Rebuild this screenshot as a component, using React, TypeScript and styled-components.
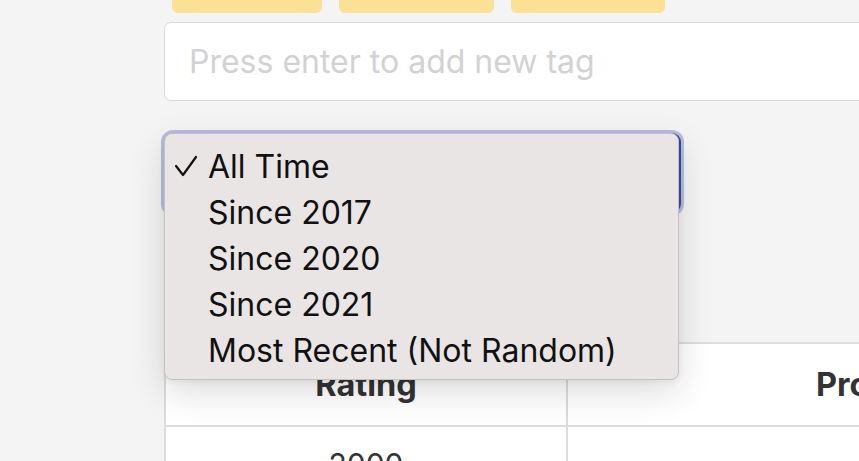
import React from "react";
import styled, { createGlobalStyle } from "styled-components";

const Global = createGlobalStyle`
  html, body { margin: 0; padding: 0; background: #f4f4f4; overflow: hidden; }
  body { font-family: Inter, "Noto Sans", sans-serif; }
`;

const Page = styled.div`
  width: 859px;
  height: 461px;
  overflow: hidden;
  padding-left: 164px;
  box-sizing: border-box;
  display: flex;
  flex-direction: column;
  & > * { flex-shrink: 0; }
`;

const TagRow = styled.div`
  display: flex;
  gap: 17px;
  padding-left: 8px;
  height: 13px;
`;

const Tag = styled.div<{ $w: number }>`
  width: ${(p) => p.$w}px;
  height: 13px;
  background: #fbe195;
  border-radius: 0 0 6px 6px;
`;

const TagInput = styled.input`
  margin-top: 9px;
  width: 760px;
  height: 79px;
  box-sizing: border-box;
  border: 1.5px solid #dadada;
  border-radius: 7px;
  background: #fff;
  padding: 0 0 0 24px;
  font-family: Inter, "Noto Sans", sans-serif;
  font-size: 32px;
  outline: none;
  &::placeholder { color: #d2d2d2; }
`;

const SelectWrap = styled.div`
  position: relative;
  margin-top: 32px;
  width: 517px;
  height: 80px;
`;

const SelectBox = styled.div`
  width: 517px;
  height: 80px;
  box-sizing: border-box;
  border: 2px solid #3b4aa8;
  border-radius: 9px;
  box-shadow: 0 0 0 3px #b9bedf;
  background: #fff;
`;

const Popup = styled.ul`
  position: absolute;
  left: 0;
  top: 0;
  width: 515px;
  height: 247px;
  box-sizing: border-box;
  margin: 0;
  padding: 9px 0 0 0;
  list-style: none;
  background: #e8e5e4;
  border: 1px solid #c4c2c1;
  border-radius: 8px;
  box-shadow: 0 12px 36px rgba(0, 0, 0, 0.14), 0 2px 6px rgba(0, 0, 0, 0.06);
  z-index: 5;
`;

const Option = styled.li`
  position: relative;
  height: 46px;
  display: flex;
  align-items: center;
  padding-left: 43px;
  font-family: Inter, "Noto Sans", sans-serif;
  font-size: 32px;
  color: #111;
  white-space: nowrap;
`;

const Check = styled.svg`
  position: absolute;
  left: 9px;
  top: 11px;
`;

const Table = styled.div`
  margin-top: 129px;
  width: 760px;
  display: grid;
  grid-template-columns: 402px 1fr;
  border-left: 2px solid #dcdcdc;
  border-top: 2px solid #dcdcdc;
  background: #fff;
`;

const Cell = styled.div<{ $head?: boolean }>`
  height: ${(p) => (p.$head ? 81 : 80)}px;
  box-sizing: ${(p) => (p.$head ? "content-box" : "border-box")};
  border-right: 2px solid #dcdcdc;
  border-bottom: 2px solid #dcdcdc;
  display: flex;
  align-items: center;
  justify-content: center;
  font-family: Inter, "Noto Sans", sans-serif;
  font-size: ${(p) => (p.$head ? 32.5 : 30)}px;
  font-weight: ${(p) => (p.$head ? 700 : 400)};
  color: #333;
`;

const HeadCellLeft = styled(Cell)`
  justify-content: flex-start;
  padding-left: 248px;
`;

const BodyCell = styled(Cell)`
  align-items: flex-start;
  line-height: 1;
  padding-top: 22px;
`;

const options = [
  "All Time",
  "Since 2017",
  "Since 2020",
  "Since 2021",
  "Most Recent (Not Random)",
];

export default function App() {
  return (
    <>
      <Global />
      <Page>
        <TagRow>
          <Tag $w={150} />
          <Tag $w={155} />
          <Tag $w={154} />
        </TagRow>
        <TagInput placeholder="Press enter to add new tag" />
        <SelectWrap>
          <SelectBox />
          <Popup>
            {options.map((o, i) => (
              <Option key={o}>
                {i === 0 && (
                  <Check width="26" height="24" viewBox="0 0 26 24">
                    <polyline
                      points="2,12 9,21 22,3"
                      fill="none"
                      stroke="#111"
                      strokeWidth="2.2"
                      strokeLinecap="round"
                      strokeLinejoin="round"
                    />
                  </Check>
                )}
                {o}
              </Option>
            ))}
          </Popup>
        </SelectWrap>
        <Table>
          <Cell $head>Rating</Cell>
          <HeadCellLeft $head>Problem</HeadCellLeft>
          <BodyCell>2000</BodyCell>
          <BodyCell />
        </Table>
      </Page>
    </>
  );
}
